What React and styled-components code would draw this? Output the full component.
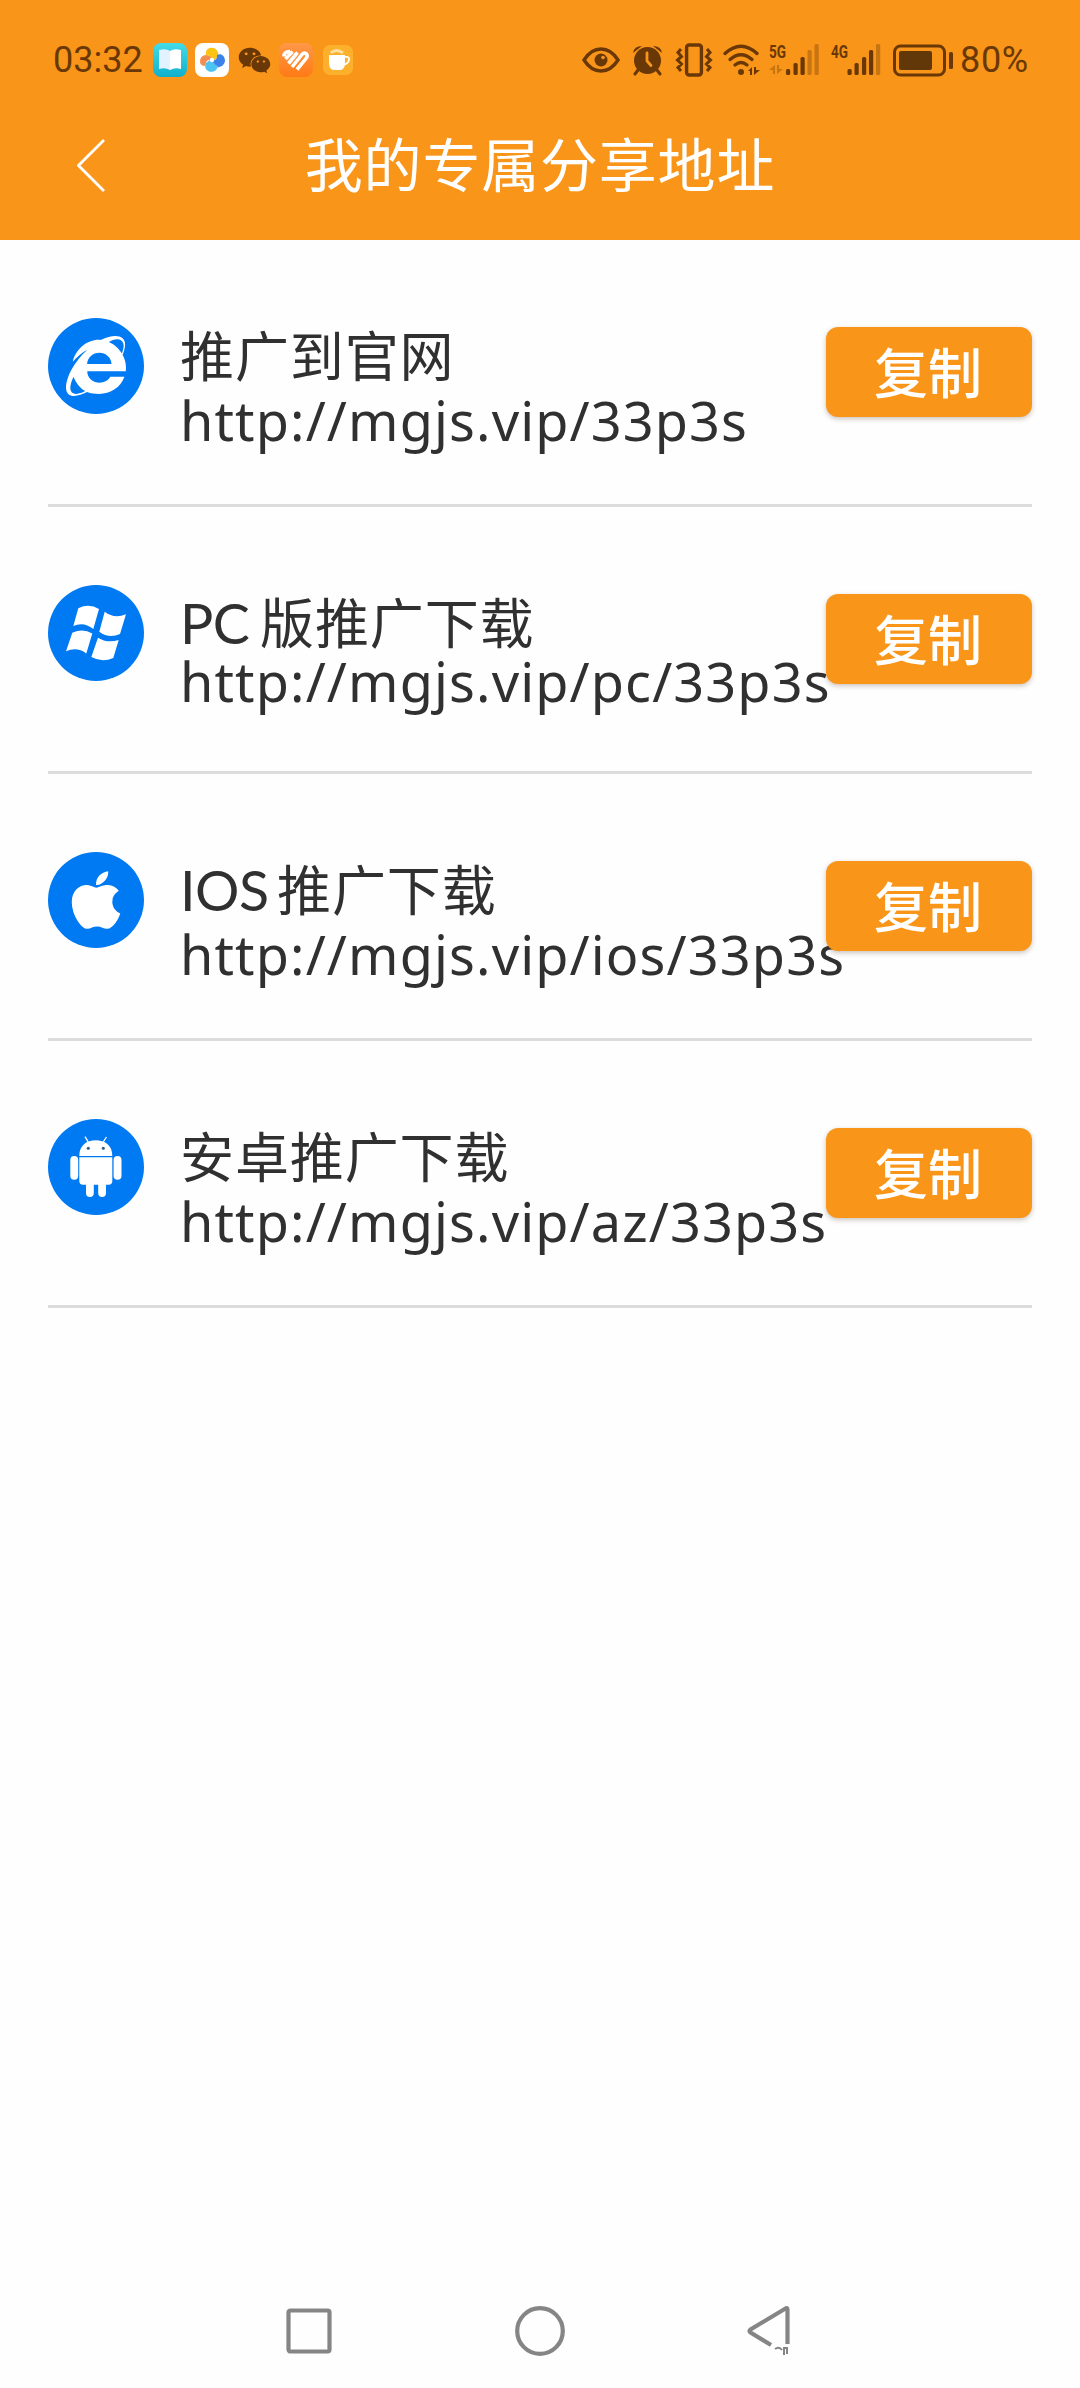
import React from 'react'
import styled, { createGlobalStyle } from 'styled-components'
import { FaApple, FaInternetExplorer, FaWeixin } from 'react-icons/fa'

const GlobalStyle = createGlobalStyle`
  * {
    box-sizing: border-box;
  }
  body {
    margin: 0;
    background: #fefefe;
    font-family: 'Noto Sans', 'Noto Sans CJK SC', sans-serif;
    color: #303030;
  }
`

const Page = styled.div`
  width: 1080px;
  height: 2388px;
  display: flex;
  flex-direction: column;
  overflow: hidden;
`

const Header = styled.header`
  height: 240px;
  background: #f99519;
`

const StatusBar = styled.div`
  height: 90px;
  padding: 30px 49px 0 53px;
  display: flex;
  justify-content: space-between;
  color: #6a3806;
`

const StatusGroup = styled.div`
  height: 60px;
  display: flex;
  align-items: center;
  svg {
    display: block;
    flex: none;
  }
`

const StatusText = styled.span`
  width: ${({ $width }) => $width}px;
  font-family: Roboto, sans-serif;
  font-size: 36px;
  line-height: 60px;
  letter-spacing: ${({ $spacing }) => $spacing || 0}px;
  white-space: nowrap;
`

const Gap = styled.i`
  flex: none;
  width: ${({ $size }) => $size}px;
`

const TitleBar = styled.div`
  height: 150px;
  padding: 0 77px;
  display: grid;
  grid-template-columns: 30px 1fr 30px;
  align-items: start;
`

const BackButton = styled.button`
  height: 150px;
  padding: 0;
  border: 0;
  background: none;
  svg {
    display: block;
  }
`

const PageTitle = styled.h1`
  margin: 27px 0 0;
  font-family: 'Noto Sans CJK SC', sans-serif;
  font-size: 58px;
  font-weight: 400;
  line-height: 90px;
  letter-spacing: 0.8px;
  text-align: center;
  color: #fff;
`

const List = styled.main`
  flex: 1;
  padding: 0 48px;
`

const Row = styled.section`
  height: 267px;
  padding-top: 78px;
  display: flex;
  align-items: flex-start;
  border-bottom: 3px solid #dcdcdc;
`

const Badge = styled.div`
  flex: none;
  width: 96px;
  height: 96px;
  display: flex;
  align-items: center;
  justify-content: center;
  border-radius: 50%;
  background: #007af2;
  color: #fff;
`

const Info = styled.div`
  width: 645px;
  flex: none;
  padding-left: 36px;
  white-space: nowrap;
`

const Name = styled.div`
  height: 60px;
  margin-top: 6px;
  display: flex;
  align-items: baseline;
  font-family: 'Noto Sans CJK SC', sans-serif;
  font-size: 54px;
  line-height: 60px;
  letter-spacing: 0.9px;
`

const Latin = styled.span`
  flex: none;
  width: ${({ $width }) => $width}px;
  font-family: Lato, sans-serif;
  font-size: 55.5px;
  letter-spacing: -0.5px;
`

const Link = styled.div`
  margin-top: ${({ $tight }) => ($tight ? -2 : 4)}px;
  font-size: 54px;
  line-height: 64px;
  letter-spacing: 1.12px;
`

const CopyButton = styled.button`
  flex: none;
  width: 206px;
  height: 90px;
  margin: 9px 0 0 auto;
  padding: 0 2px 2px 0;
  border: 0;
  border-radius: 12px;
  background: #f99519;
  box-shadow: 0 2px 5px rgba(90, 60, 40, 0.3);
  font-family: 'Noto Sans CJK SC', sans-serif;
  font-size: 54px;
  font-weight: 500;
  line-height: 88px;
  color: #fff;
`

const NavBar = styled.nav`
  height: 114px;
  padding: 0 287px 0 286px;
  display: flex;
  align-items: center;
  justify-content: space-between;
`

const BookIcon = () => (
  <svg width='34' height='34' viewBox='0 0 34 34'>
    <defs>
      <linearGradient id='book' x2='0' y2='1'>
        <stop stopColor='#45dbe8' />
        <stop offset='1' stopColor='#10b0cc' />
      </linearGradient>
    </defs>
    <rect width='34' height='34' rx='8' fill='url(#book)' />
    <path d='M6 7q7-2 11 1v19q-5-3-11-1z' fill='#e3f2ff' />
    <path d='M17 8q4-3 11-1v19q-6-2-11 1z' fill='#fff' />
  </svg>
)

const GalleryIcon = () => (
  <svg width='34' height='34' viewBox='0 0 34 34'>
    <rect width='34' height='34' rx='8' fill='#fff' />
    <path d='M5.500 21C3.500 14 9 10 15 13l3 3-4 1c-3 0-3 4-4 6q-3 0-4.500-2z' fill='#f28e52' />
    <path d='M11 12C10 6 15 3.500 20 5.500q4 2.500 3.500 8.500L19 17l-3-3q-2-1.500-5-2z' fill='#fbc413' />
    <path d='M22 12c4-2 8 1 8 6-1 5-5 7-10 6l-4-5 3-2c3 0 3-3 3-5z' fill='#3b82ea' />
    <path d='M11 20l4-3 4 3c1 2 3 2 4 3-1 5-5 6.500-9 5.500-4-2-4.500-5-3-8.500z' fill='#4cc3f3' />
    <circle cx='17' cy='17' r='2.200' fill='#fff' />
  </svg>
)

const HealthIcon = () => (
  <svg width='34' height='34' viewBox='0 0 34 34'>
    <defs>
      <linearGradient id='health' x2='0' y2='1'>
        <stop stopColor='#ff9848' />
        <stop offset='1' stopColor='#ff7a16' />
      </linearGradient>
    </defs>
    <rect width='34' height='34' rx='8' fill='url(#health)' />
    <g stroke='#fff' strokeWidth='3.600' fill='none'>
      <path d='M5 13.500q0-5 6-5' />
      <path d='M6.500 16l7-7.500' />
      <path d='M9.500 20.500l9-11' />
      <path d='M13 24l10-12.500q2-2.500 4.500-.5 1.500 2-.5 4.500l-9 11' />
    </g>
  </svg>
)

const CupIcon = () => (
  <svg width='30' height='30' viewBox='0 0 30 30'>
    <rect width='30' height='30' rx='7' fill='#fdb02c' />
    <path d='M8 8q5-5 12 0' stroke='#ffe0a0' strokeWidth='3' fill='none' />
    <path d='M6 10h16v7q0 8-5 8h-6q-5 0-5-8z' fill='#fff' />
    <path d='M21 12q6-1 5 3-1 4-6 5' stroke='#fff' strokeWidth='1.700' fill='none' />
  </svg>
)

const EyeIcon = () => (
  <svg width='38' height='26' viewBox='0 0 38 26'>
    <path d='M2 13Q9 2 19 2t17 11Q29 24 19 24T2 13z' fill='none' stroke='currentColor' strokeWidth='3.400' />
    <circle cx='19' cy='13' r='6.500' fill='currentColor' />
    <circle cx='21' cy='10.500' r='1.800' fill='#f99519' />
  </svg>
)

const AlarmIcon = () => (
  <svg width='31' height='31' viewBox='0 0 31 31'>
    <path d='M1 8q1-7 9-7zM30 8q-1-7-9-7z' fill='currentColor' />
    <path d='M6 25l-3 4M25 25l3 4' stroke='currentColor' strokeWidth='3' strokeLinecap='round' />
    <circle cx='15.500' cy='15.500' r='13.500' fill='currentColor' />
    <path d='M15 8v8l4 4.500' stroke='#f99519' strokeWidth='2.800' fill='none' strokeLinecap='round' />
  </svg>
)

const VibrateIcon = () => (
  <svg width='38' height='34' viewBox='0 0 38 34'>
    <g fill='none' stroke='currentColor'>
      <rect x='11.600' y='2' width='14.800' height='30' rx='2.500' strokeWidth='3.400' />
      <path d='M6 6L3 9.500l3.500 4L2.500 17l4 4L3 24.500 6 28M32 6l3 3.500-3.500 4 4 3.500-4 4 3.500 3.500-3 3.500' strokeWidth='3' />
    </g>
  </svg>
)

const WifiIcon = () => (
  <svg width='38' height='32' viewBox='0 0 38 32'>
    <g fill='none' stroke='currentColor' strokeWidth='3.300' strokeLinecap='round'>
      <path d='M2 9.500Q18 -5 34 9.500' />
      <path d='M7 15.500q11-9.500 22 0' />
      <path d='M12 21q6-5 12 0' />
    </g>
    <circle cx='18' cy='28' r='3' fill='currentColor' />
    <path d='M25 27l4-4v8h-2v-4zM31 23h2v3h4l-6 5z' fill='currentColor' />
  </svg>
)

const SignalLabel = styled.text`
  font-family: Roboto, sans-serif;
  font-size: 19px;
  font-weight: 700;
`

const Bar = ({ x, height, faint }) => (
  <rect x={x} y={31 - height} width='4.200' height={height} rx='1.500' fill='currentColor' opacity={faint ? 0.35 : 1} />
)

const Signal5G = () => (
  <svg width='51' height='44' viewBox='0 -6 51 44'>
    <SignalLabel y='13.500' textLength='17' lengthAdjust='spacingAndGlyphs' fill='currentColor'>5G</SignalLabel>
    <path d='M0 26l6-5v9H4v-4zM8 21h2v4h4l-6 5z' fill='currentColor' opacity='.35' />
    <Bar x={17} height={6} />
    <Bar x={24.500} height={12} />
    <Bar x={31.500} height={18} />
    <Bar x={38.500} height={25} faint />
    <Bar x={45.500} height={31} faint />
  </svg>
)

const Signal4G = () => (
  <svg width='51' height='44' viewBox='0 -6 51 44'>
    <SignalLabel y='13.500' textLength='17' lengthAdjust='spacingAndGlyphs' fill='currentColor'>4G</SignalLabel>
    <Bar x={16.500} height={6} />
    <Bar x={23.500} height={12} />
    <Bar x={31} height={18} />
    <Bar x={38} height={25} />
    <Bar x={45} height={31} faint />
  </svg>
)

const BatteryIcon = () => (
  <svg width='60' height='33' viewBox='0 0 60 33'>
    <rect x='1.500' y='2' width='50' height='29' rx='6' fill='none' stroke='currentColor' strokeWidth='3' />
    <rect x='6' y='7' width='33' height='19' rx='2' fill='#633808' />
    <rect x='56' y='8' width='4' height='17' rx='1.500' fill='currentColor' />
  </svg>
)

const WindowsIcon = () => (
  <svg width='96' height='96' viewBox='0 0 96 96' fill='currentColor'>
    <path d='M30.300 23.300Q41 18 51 24L45.300 44Q36 36.500 25.300 41z' />
    <path d='M56.700 26.700Q66 34 78 29.300L72 49Q61 54 51.300 46.700z' />
    <path d='M24.300 47.700Q35 43 44.300 48.500L38.300 68.500Q29 61.500 18 66.300z' />
    <path d='M50 52.700Q59 58.500 70.700 55L65.300 73Q54 78 43.300 72z' />
  </svg>
)

const AndroidIcon = () => (
  <svg width='96' height='96' viewBox='0 0 96 96' fill='currentColor'>
    <path d='M37 17.700l3.300 5.500M58.500 18l-3.300 5' stroke='currentColor' strokeWidth='1.300' />
    <path d='M31.300 37C31.300 26 39 21.300 47.800 21.300S64.300 26 64.300 37z' />
    <path d='M31.300 38.200h33V62q0 3.700-3.700 3.700H35q-3.700 0-3.700-3.700z' />
    <rect x='22.300' y='37' width='7.900' height='23.700' rx='3.900' />
    <rect x='65.600' y='37' width='7.900' height='23.700' rx='3.900' />
    <path d='M38 62h7.800v12.100a3.900 3.900 0 0 1-7.800 0zM50.200 62H58v12.100a3.900 3.900 0 0 1-7.800 0z' />
    <circle cx='40.300' cy='29.300' r='1.500' fill='#315b80' />
    <circle cx='55.300' cy='29.300' r='1.500' fill='#315b80' />
  </svg>
)

const links = [
  { id: 1, icon: <FaInternetExplorer size={60} />, name: '推广到官网', url: 'http://mgjs.vip/33p3s' },
  { id: 2, icon: <WindowsIcon />, latin: 'PC', latinWidth: 80, name: '版推广下载', url: 'http://mgjs.vip/pc/33p3s', tight: true },
  { id: 3, icon: <FaApple size={66} />, latin: 'IOS', latinWidth: 97, name: '推广下载', url: 'http://mgjs.vip/ios/33p3s' },
  { id: 4, icon: <AndroidIcon />, name: '安卓推广下载', url: 'http://mgjs.vip/az/33p3s' },
]

const App = () => {
  return (
    <Page>
      <GlobalStyle />
      <Header>
        <StatusBar>
          <StatusGroup>
            <StatusText $width={100}>03:32</StatusText>
            <BookIcon />
            <Gap $size={8} />
            <GalleryIcon />
            <Gap $size={9} />
            <FaWeixin size={33} />
            <Gap $size={8} />
            <HealthIcon />
            <Gap $size={10} />
            <CupIcon />
          </StatusGroup>
          <StatusGroup>
            <EyeIcon />
            <Gap $size={12} />
            <AlarmIcon />
            <Gap $size={12} />
            <VibrateIcon />
            <Gap $size={10} />
            <WifiIcon />
            <Gap $size={8} />
            <Signal5G />
            <Gap $size={11} />
            <Signal4G />
            <Gap $size={11} />
            <BatteryIcon />
            <Gap $size={7} />
            <StatusText $width={71} $spacing={0.7}>80%</StatusText>
          </StatusGroup>
        </StatusBar>
        <TitleBar>
          <BackButton>
            <svg width='30' height='150' viewBox='0 0 30 150'>
              <path d='M27 50L1.500 75.500 27 101' fill='none' stroke='#fff' strokeWidth='2.800' />
            </svg>
          </BackButton>
          <PageTitle>我的专属分享地址</PageTitle>
        </TitleBar>
      </Header>
      <List>
        {links.map((item) => {
          return (
            <Row key={item.id}>
              <Badge>{item.icon}</Badge>
              <Info>
                <Name>
                  {item.latin && <Latin $width={item.latinWidth}>{item.latin}</Latin>}
                  <span>{item.name}</span>
                </Name>
                <Link $tight={item.tight}>{item.url}</Link>
              </Info>
              <CopyButton>复制</CopyButton>
            </Row>
          )
        })}
      </List>
      <NavBar>
        <svg width='46' height='50' viewBox='0 0 46 50'>
          <rect x='2.500' y='4.500' width='41' height='41' rx='2' fill='none' stroke='#858585' strokeWidth='4.200' />
        </svg>
        <svg width='50' height='50' viewBox='0 0 50 50'>
          <circle cx='25' cy='25' r='22.800' fill='none' stroke='#858585' strokeWidth='4.200' />
        </svg>
        <svg width='46' height='50' viewBox='0 0 46 50'>
          <path d='M24 39L3.500 26.500q-2-1.500 0-3L38.500 2.500q2-1 2 1V38' fill='none' stroke='#858585' strokeWidth='4.200' />
          <path d='M28 43q4-3 7 1M37 49v-7l3 0v6' fill='none' stroke='#858585' strokeWidth='2' />
        </svg>
      </NavBar>
    </Page>
  )
}

export default App
